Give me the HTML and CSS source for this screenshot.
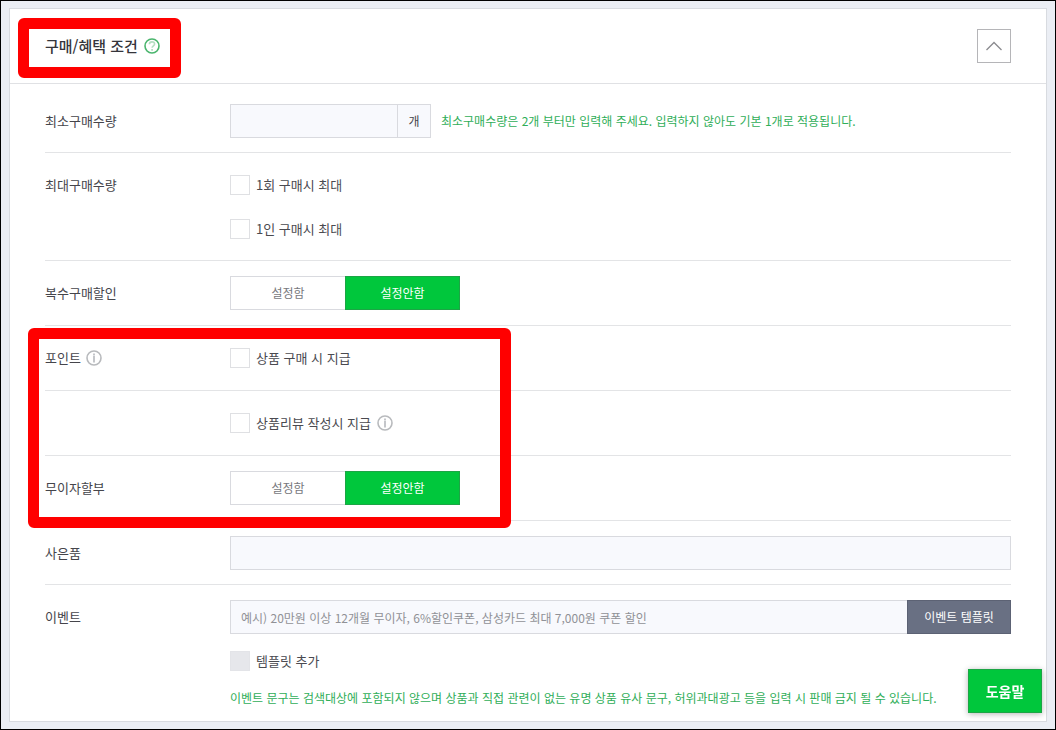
FILE: index.html
```html
<!DOCTYPE html>
<html lang="ko">
<head>
    <meta charset="UTF-8">
    <meta name="viewport" content="width=device-width, initial-scale=1.0">
    <title>구매/혜택 조건</title>
    <link rel="stylesheet" href="styles.css">
</head>
<body>
    <section class="card">
        <header class="card-header">
            <h2 class="card-title">구매/혜택 조건</h2>
            <button type="button" class="icon-btn" aria-label="도움말 보기">
                <svg width="16" height="16" viewBox="0 0 16 16" fill="none">
                    <circle cx="8" cy="8" r="7" stroke="#4ab56d" stroke-width="1.6"/>
                    <path d="M5.4 6.3C5.4 4.7 6.5 3.9 8 3.9s2.600.9 2.600 2.200c0 1.700-2.500 1.800-2.500 3.600" stroke="#b5dec2" stroke-width="1.6"/>
                    <path d="M8.1 11v1.700" stroke="#b5dec2" stroke-width="1.8"/>
                </svg>
            </button>
            <button type="button" class="fold-btn" aria-label="접기">
                <svg width="18" height="10" viewBox="0 0 18 10" fill="none">
                    <path d="M1.5 9L9 1.5L16.5 9" stroke="#8b8b8f" stroke-width="1.3"/>
                </svg>
            </button>
        </header>

        <form class="card-body">
            <div class="row row-tight">
                <label class="row-label" for="min-count">최소구매수량</label>
                <div class="row-content">
                    <div class="line">
                        <div class="unit-box">
                            <input type="text" id="min-count" class="text-input">
                            <span class="unit">개</span>
                        </div>
                        <p class="hint">최소구매수량은 2개 부터만 입력해 주세요. 입력하지 않아도 기본 1개로 적용됩니다.</p>
                    </div>
                </div>
            </div>

            <div class="row row-tight">
                <div class="row-label">최대구매수량</div>
                <div class="row-content">
                    <div class="line"><label class="check"><input type="checkbox">1회 구매시 최대</label></div>
                    <div class="line"><label class="check"><input type="checkbox">1인 구매시 최대</label></div>
                </div>
            </div>

            <div class="row">
                <div class="row-label">복수구매할인</div>
                <div class="row-content">
                    <div class="toggle">
                        <label class="toggle-item"><input type="radio" name="multi-discount"><span>설정함</span></label>
                        <label class="toggle-item"><input type="radio" name="multi-discount" checked><span>설정안함</span></label>
                    </div>
                </div>
            </div>

            <div class="row">
                <div class="row-label">포인트
                    <button type="button" class="icon-btn" aria-label="포인트 안내">
                        <svg width="16" height="16" viewBox="0 0 16 16" fill="none">
                            <circle cx="8" cy="8" r="7" stroke="#b8babd" stroke-width="1.6"/>
                            <path d="M8 3.5v1.500M8 5.500v7" stroke="#c4c6ca" stroke-width="2"/>
                        </svg>
                    </button>
                </div>
                <div class="row-content">
                    <div class="line"><label class="check"><input type="checkbox">상품 구매 시 지급</label></div>
                </div>
            </div>

            <div class="row">
                <div class="row-label"></div>
                <div class="row-content">
                    <div class="line">
                        <label class="check"><input type="checkbox">상품리뷰 작성시 지급</label>
                        <button type="button" class="icon-btn" aria-label="상품리뷰 안내">
                            <svg width="16" height="16" viewBox="0 0 16 16" fill="none">
                                <circle cx="8" cy="8" r="7" stroke="#b8babd" stroke-width="1.6"/>
                                <path d="M8 3.5v1.500M8 5.500v7" stroke="#c4c6ca" stroke-width="2"/>
                            </svg>
                        </button>
                    </div>
                </div>
            </div>

            <div class="row">
                <div class="row-label">무이자할부</div>
                <div class="row-content">
                    <div class="toggle">
                        <label class="toggle-item"><input type="radio" name="installment"><span>설정함</span></label>
                        <label class="toggle-item"><input type="radio" name="installment" checked><span>설정안함</span></label>
                    </div>
                </div>
            </div>

            <div class="row row-tight">
                <label class="row-label" for="gift">사은품</label>
                <div class="row-content">
                    <input type="text" id="gift" class="text-input">
                </div>
            </div>

            <div class="row">
                <label class="row-label" for="event">이벤트</label>
                <div class="row-content">
                    <div class="event-box">
                        <input type="text" id="event" class="text-input" placeholder="예시) 20만원 이상 12개월 무이자, 6%할인쿠폰, 삼성카드 최대 7,000원 쿠폰 할인">
                        <button type="button" class="template-btn">이벤트 템플릿</button>
                    </div>
                    <div class="line"><label class="check"><input type="checkbox" disabled>템플릿 추가</label></div>
                    <p class="hint">이벤트 문구는 검색대상에 포함되지 않으며 상품과 직접 관련이 없는 유명 상품 유사 문구, 허위과대광고 등을 입력 시 판매 금지 될 수 있습니다.</p>
                </div>
            </div>
        </form>
    </section>

    <button type="button" class="help-btn">도움말</button>

    <div class="mark mark-title"></div>
    <div class="mark mark-point"></div>
</body>
</html>
```
FILE: styles.css
```css
* {
    margin: 0;
    padding: 0;
    box-sizing: border-box;
}

body {
    position: relative;
    min-height: 100vh;
    display: flex;
    flex-direction: column;
    padding: 7px 8px;
    border: 1px solid #000;
    background: #ebeef4;
    color: #45454b;
    font-family: "Noto Sans CJK KR", sans-serif;
    font-size: 13px;
    line-height: 20px;
}

button,
input {
    font: inherit;
}

button {
    cursor: pointer;
}

.card {
    flex: 1;
    background: #fff;
    border: 1px solid #d8dbe0;
}

.card-header {
    display: flex;
    align-items: center;
    gap: 6px;
    height: 75px;
    padding: 0 35px;
    border-bottom: 1px solid #e0e1e4;
}

.card-title {
    color: #35353b;
    font-size: 15px;
    font-weight: 500;
}

.icon-btn {
    display: flex;
    border: 0;
    background: none;
}

.fold-btn {
    display: flex;
    align-items: center;
    justify-content: center;
    width: 34px;
    height: 34px;
    margin-left: auto;
    border: 1px solid #b5b5b8;
    background: #fff;
}

.card-body {
    padding: 5px 35px 0;
}

.row {
    display: flex;
    padding: 15px 0;
    border-bottom: 1px solid #e3e4e6;
}

.row-tight {
    padding-bottom: 14px;
}

.row:last-child {
    padding-bottom: 0;
    border-bottom: 0;
}

.row-label {
    display: flex;
    align-items: center;
    gap: 5px;
    flex: 0 0 185px;
    height: 34px;
}

.row-content {
    flex: 1;
    min-width: 0;
    display: flex;
    flex-direction: column;
    gap: 10px;
}

.line {
    display: flex;
    align-items: center;
    gap: 6px;
    min-height: 34px;
}

.text-input {
    width: 100%;
    height: 34px;
    padding: 0 10px;
    border: 1px solid #d9dadf;
    background: #f8f9fd;
    color: #35353b;
    font-size: 12px;
    outline: none;
}

.text-input::placeholder {
    color: #909196;
}

.unit-box {
    display: flex;
    width: 201px;
    margin-right: 4px;
}

.unit {
    flex: 0 0 33px;
    line-height: 32px;
    text-align: center;
    font-size: 12px;
    border: 1px solid #d9dadf;
    border-left: 0;
    background: #f8f9fd;
}

.hint {
    color: #2fae58;
    font-size: 12px;
}

.check {
    display: flex;
    align-items: center;
    gap: 6px;
    color: #4a4a50;
}

.check input {
    appearance: none;
    width: 20px;
    height: 20px;
    border: 1px solid #dfe0e3;
    background: #fff;
}

.check input:checked {
    background: #00c73c;
}

.check input:disabled {
    border-color: #e3e4e8;
    background: #e6e7eb;
}

.toggle {
    display: flex;
    width: 230px;
}

.toggle-item {
    position: relative;
    flex: 1;
    cursor: pointer;
}

.toggle-item input {
    position: absolute;
    opacity: 0;
}

.toggle-item span {
    display: block;
    line-height: 32px;
    text-align: center;
    font-size: 12px;
    color: #77787d;
    border: 1px solid #d9dadf;
    border-right: 0;
}

.toggle-item input:checked + span {
    color: #fff;
    background: #00c73c;
    border: 1px solid #1ca545;
}

.event-box {
    display: flex;
}

.event-box .text-input {
    flex: 1;
    border-right: 0;
}

.template-btn {
    flex: 0 0 104px;
    height: 34px;
    border: 1px solid #5c6274;
    background: #697083;
    color: #fff;
    font-size: 12px;
}

.help-btn {
    position: fixed;
    right: 14px;
    bottom: 17px;
    width: 74px;
    height: 44px;
    border: 1px solid #1ca545;
    background: #00c73c;
    color: #fff;
    font-size: 14px;
    font-weight: 700;
    box-shadow: 0 1px 6px rgba(0, 0, 0, 0.3);
}

/* red highlight frames */
.mark {
    position: absolute;
    border: 11px solid #ff0000;
    border-radius: 6px;
    pointer-events: none;
}

.mark-title {
    top: 17px;
    left: 17px;
    width: 163px;
    height: 60px;
}

.mark-point {
    top: 327px;
    left: 27px;
    width: 483px;
    height: 200px;
}
```
